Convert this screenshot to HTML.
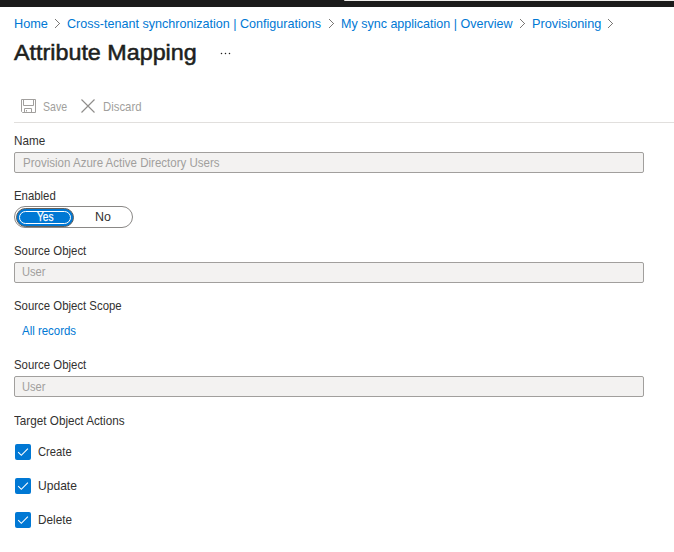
<!DOCTYPE html>
<html><head><meta charset="utf-8"><style>
html,body{margin:0;padding:0;background:#fff;width:674px;height:552px;overflow:hidden;position:relative}
.t{position:absolute;font-family:"Liberation Sans",sans-serif;line-height:1;white-space:nowrap;transform-origin:0 0}
</style></head><body>
<div style="position:absolute;left:0;top:0;width:674px;height:7px;background:#1b1b1b"></div><div style="position:absolute;left:344px;top:0;width:330px;height:1px;background:#efedeb;border-bottom-left-radius:2px"></div><div class="t" style="left:13.78px;top:17.00px;font-size:13px;color:#0078d4;transform:scaleX(0.9782);">Home</div>
<div class="t" style="left:67.27px;top:17.00px;font-size:13px;color:#0078d4;transform:scaleX(0.9664);">Cross-tenant synchronization | Configurations</div>
<div class="t" style="left:340.50px;top:17.00px;font-size:13px;color:#0078d4;transform:scaleX(0.9628);">My sync application | Overview</div>
<div class="t" style="left:531.58px;top:17.00px;font-size:13px;color:#0078d4;transform:scaleX(0.9782);">Provisioning</div>
<svg style="position:absolute;left:55px;top:19px" width="5" height="9" viewBox="0 0 5 9" fill="#7a7876"><rect x="0" y="0" width="1" height="1"/><rect x="1" y="1" width="1" height="1"/><rect x="2" y="2" width="1" height="1"/><rect x="3" y="3" width="1" height="1"/><rect x="4" y="4" width="1" height="1"/><rect x="3" y="5" width="1" height="1"/><rect x="2" y="6" width="1" height="1"/><rect x="1" y="7" width="1" height="1"/><rect x="0" y="8" width="1" height="1"/></svg>
<svg style="position:absolute;left:329px;top:19px" width="5" height="9" viewBox="0 0 5 9" fill="#7a7876"><rect x="0" y="0" width="1" height="1"/><rect x="1" y="1" width="1" height="1"/><rect x="2" y="2" width="1" height="1"/><rect x="3" y="3" width="1" height="1"/><rect x="4" y="4" width="1" height="1"/><rect x="3" y="5" width="1" height="1"/><rect x="2" y="6" width="1" height="1"/><rect x="1" y="7" width="1" height="1"/><rect x="0" y="8" width="1" height="1"/></svg>
<svg style="position:absolute;left:520px;top:19px" width="5" height="9" viewBox="0 0 5 9" fill="#7a7876"><rect x="0" y="0" width="1" height="1"/><rect x="1" y="1" width="1" height="1"/><rect x="2" y="2" width="1" height="1"/><rect x="3" y="3" width="1" height="1"/><rect x="4" y="4" width="1" height="1"/><rect x="3" y="5" width="1" height="1"/><rect x="2" y="6" width="1" height="1"/><rect x="1" y="7" width="1" height="1"/><rect x="0" y="8" width="1" height="1"/></svg>
<svg style="position:absolute;left:608px;top:19px" width="5" height="9" viewBox="0 0 5 9" fill="#7a7876"><rect x="0" y="0" width="1" height="1"/><rect x="1" y="1" width="1" height="1"/><rect x="2" y="2" width="1" height="1"/><rect x="3" y="3" width="1" height="1"/><rect x="4" y="4" width="1" height="1"/><rect x="3" y="5" width="1" height="1"/><rect x="2" y="6" width="1" height="1"/><rect x="1" y="7" width="1" height="1"/><rect x="0" y="8" width="1" height="1"/></svg>
<div class="t" style="left:13.78px;top:41.00px;font-size:22.9px;color:#201f1e;transform:scaleX(1.0185);-webkit-text-stroke:0.55px #201f1e;">Attribute Mapping</div>
<svg style="position:absolute;left:216px;top:48px" width="20" height="12" viewBox="0 0 20 12"><g fill="#201f1e"><circle cx="5.5" cy="5.5" r="0.78"/><circle cx="9.5" cy="5.5" r="0.78"/><circle cx="13.5" cy="5.5" r="0.78"/></g></svg><svg style="position:absolute;left:20px;top:98px" width="16" height="16" viewBox="0 0 16 16">
<path d="M1.5 1.5 H15.5 V14.5 H2.5 L1.5 13.5 Z" fill="none" stroke="#a19f9d" stroke-width="1"/>
<path d="M3.5 1.5 V7.5 H13.5 V1.5" fill="none" stroke="#a19f9d" stroke-width="1"/>
<path d="M4.5 14.5 V10.5 H11.5 V14.5" fill="none" stroke="#a19f9d" stroke-width="1"/>
<rect x="6" y="12" width="1" height="1.5" fill="#a19f9d"/>
</svg><div class="t" style="left:42.62px;top:101.00px;font-size:12.6px;color:#a19f9d;transform:scaleX(0.8408);">Save</div>
<svg style="position:absolute;left:80px;top:98px" width="16" height="16" viewBox="0 0 16 16">
<path d="M1.5 1.5 L14.5 14.5 M14.5 1.5 L1.5 14.5" fill="none" stroke="#8f8d8b" stroke-width="1.15"/>
</svg><div class="t" style="left:102.69px;top:101.00px;font-size:12.6px;color:#a19f9d;transform:scaleX(0.9025);">Discard</div>
<div style="position:absolute;left:14px;top:122px;width:660px;height:1px;background:#e1dfdd"></div><div class="t" style="left:13.86px;top:135.00px;font-size:12.6px;color:#323130;transform:scaleX(0.9280);">Name</div>
<div style="position:absolute;left:14px;top:152px;width:630px;height:21px;box-sizing:border-box;border:1px solid #a19f9d;border-radius:2px;background:#f3f2f1"></div>
<div class="t" style="left:22.68px;top:157.00px;font-size:12.6px;color:#a19f9d;transform:scaleX(0.9147);">Provision Azure Active Directory Users</div>
<div class="t" style="left:13.99px;top:190.00px;font-size:12.6px;color:#323130;transform:scaleX(0.9028);">Enabled</div>
<div style="position:absolute;left:14px;top:206px;width:119px;height:22px;box-sizing:border-box;border:1px solid #8a8886;border-radius:11px;background:#fff"></div><div style="position:absolute;left:16px;top:208px;width:58px;height:19px;box-sizing:border-box;border:1px solid #605e5c;border-radius:10px;background:#0078d4"></div><div style="position:absolute;left:19px;top:211px;width:52px;height:13px;box-sizing:border-box;border:1px solid #fff;border-radius:7px"></div><div class="t" style="left:36.85px;top:211.00px;font-size:12.6px;color:#fff;transform:scaleX(0.7987);-webkit-text-stroke:0.25px #fff;">Yes</div>
<div class="t" style="left:94.80px;top:211.00px;font-size:12.6px;color:#323130;transform:scaleX(0.9895);">No</div>
<div class="t" style="left:14.19px;top:245.00px;font-size:12.6px;color:#323130;transform:scaleX(0.9054);">Source Object</div>
<div style="position:absolute;left:14px;top:262px;width:630px;height:21px;box-sizing:border-box;border:1px solid #a19f9d;border-radius:2px;background:#f3f2f1"></div>
<div class="t" style="left:22.26px;top:266.00px;font-size:12.6px;color:#a19f9d;transform:scaleX(0.8840);">User</div>
<div class="t" style="left:13.69px;top:300.00px;font-size:12.6px;color:#323130;transform:scaleX(0.9047);">Source Object Scope</div>
<div class="t" style="left:21.94px;top:325.00px;font-size:12.6px;color:#0078d4;transform:scaleX(0.9080);">All records</div>
<div class="t" style="left:14.19px;top:359.00px;font-size:12.6px;color:#323130;transform:scaleX(0.9054);">Source Object</div>
<div style="position:absolute;left:14px;top:376px;width:630px;height:21px;box-sizing:border-box;border:1px solid #a19f9d;border-radius:2px;background:#f3f2f1"></div>
<div class="t" style="left:22.26px;top:381.00px;font-size:12.6px;color:#a19f9d;transform:scaleX(0.8840);">User</div>
<div class="t" style="left:13.97px;top:415.00px;font-size:12.6px;color:#323130;transform:scaleX(0.9292);">Target Object Actions</div>
<div style="position:absolute;left:15px;top:444px;width:16px;height:16px;border-radius:2px;background:#0078d4"></div>
<svg style="position:absolute;left:15px;top:444px" width="16" height="16" viewBox="0 0 16 16"><path d="M3.2 8.2 L6.3 11.3 L12.9 4.6" fill="none" stroke="#fff" stroke-width="1.1"/></svg>
<div class="t" style="left:37.94px;top:446.00px;font-size:12.6px;color:#323130;transform:scaleX(0.8906);">Create</div>
<div style="position:absolute;left:15px;top:478px;width:16px;height:16px;border-radius:2px;background:#0078d4"></div>
<svg style="position:absolute;left:15px;top:478px" width="16" height="16" viewBox="0 0 16 16"><path d="M3.2 8.2 L6.3 11.3 L12.9 4.6" fill="none" stroke="#fff" stroke-width="1.1"/></svg>
<div class="t" style="left:37.59px;top:480.00px;font-size:12.6px;color:#323130;transform:scaleX(0.9585);">Update</div>
<div style="position:absolute;left:15px;top:512px;width:16px;height:16px;border-radius:2px;background:#0078d4"></div>
<svg style="position:absolute;left:15px;top:512px" width="16" height="16" viewBox="0 0 16 16"><path d="M3.2 8.2 L6.3 11.3 L12.9 4.6" fill="none" stroke="#fff" stroke-width="1.1"/></svg>
<div class="t" style="left:37.56px;top:514.00px;font-size:12.6px;color:#323130;transform:scaleX(0.9357);">Delete</div>

</body></html>
